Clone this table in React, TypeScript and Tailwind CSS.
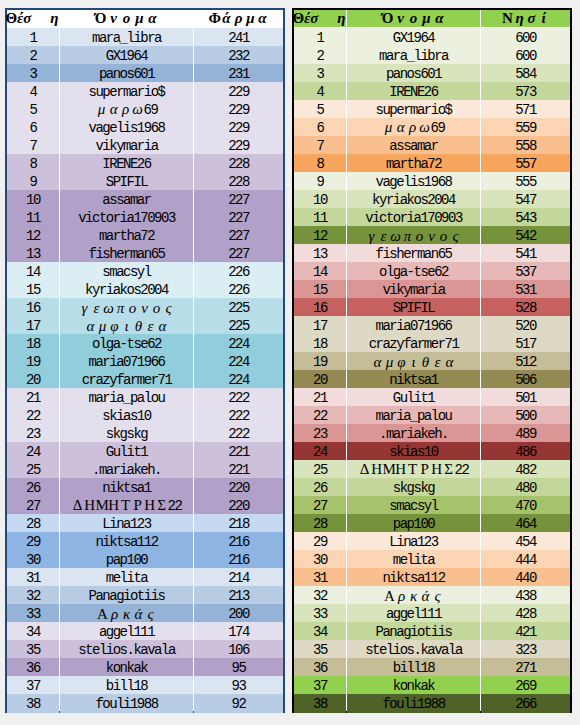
import React from "react";

type Row = [number, string, number, string];

const L1 = "#dbe5f1", L2 = "#b8cce4", L3 = "#95b3d7";
const P1 = "#e4dfec", P2 = "#ccc0da", P3 = "#b1a0c7";
const A1 = "#daeef3", A2 = "#b7dde8", A3 = "#92cddc";
const B28 = "#c5d9f1", B29 = "#8db4e2";

const leftRows: Row[] = [
  [1, "mara_libra", 241, L1],
  [2, "GX1964", 232, L2],
  [3, "panos601", 231, L3],
  [4, "supermario$", 229, P1],
  [5, "μαρω69", 229, P1],
  [6, "vagelis1968", 229, P1],
  [7, "vikymaria", 229, P1],
  [8, "IRENE26", 228, P2],
  [9, "SPIFIL", 228, P2],
  [10, "assamar", 227, P3],
  [11, "victoria170903", 227, P3],
  [12, "martha72", 227, P3],
  [13, "fisherman65", 227, P3],
  [14, "smacsyl", 226, A1],
  [15, "kyriakos2004", 226, A1],
  [16, "γεωπονος", 225, A2],
  [17, "αμφιθεα", 225, A2],
  [18, "olga-tse62", 224, A3],
  [19, "maria071966", 224, A3],
  [20, "crazyfarmer71", 224, A3],
  [21, "maria_palou", 222, P1],
  [22, "skias10", 222, P1],
  [23, "skgskg", 222, P1],
  [24, "Gulit1", 221, P2],
  [25, ".mariakeh.", 221, P2],
  [26, "niktsa1", 220, P3],
  [27, "ΔΗΜΗΤΡΗΣ22", 220, P3],
  [28, "Lina123", 218, B28],
  [29, "niktsa112", 216, B29],
  [30, "pap100", 216, B29],
  [31, "melita", 214, L1],
  [32, "Panagiotiis", 213, L2],
  [33, "Αρκάς", 200, L3],
  [34, "aggel111", 174, P1],
  [35, "stelios.kavala", 106, P2],
  [36, "konkak", 95, P3],
  [37, "bill18", 93, L1],
  [38, "fouli1988", 92, L2],
];

const G1 = "#ebf1de", G2 = "#d8e4bc", G3 = "#c4d79b", G4 = "#76933c";
const O1 = "#fde9d9", O2 = "#fcd5b4", O3 = "#fabf8f", O4 = "#f8a55d";
const R1 = "#f2dcdb", R2 = "#e6b8b7", R3 = "#da9694";
const T1 = "#ddd9c4", T2 = "#c4bd97", T3 = "#948a54";

const rightRows: Row[] = [
  [1, "GX1964", 600, G1],
  [2, "mara_libra", 600, G1],
  [3, "panos601", 584, G2],
  [4, "IRENE26", 573, G3],
  [5, "supermario$", 571, O1],
  [6, "μαρω69", 559, O2],
  [7, "assamar", 558, O3],
  [8, "martha72", 557, O4],
  [9, "vagelis1968", 555, G1],
  [10, "kyriakos2004", 547, G2],
  [11, "victoria170903", 543, G3],
  [12, "γεωπονος", 542, G4],
  [13, "fisherman65", 541, R1],
  [14, "olga-tse62", 537, R2],
  [15, "vikymaria", 531, R3],
  [16, "SPIFIL", 528, "#c5615e"],
  [17, "maria071966", 520, T1],
  [18, "crazyfarmer71", 517, T1],
  [19, "αμφιθεα", 512, T2],
  [20, "niktsa1", 506, T3],
  [21, "Gulit1", 501, R1],
  [22, "maria_palou", 500, R2],
  [23, ".mariakeh.", 489, R3],
  [24, "skias10", 486, "#963634"],
  [25, "ΔΗΜΗΤΡΗΣ22", 482, G2],
  [26, "skgskg", 480, G3],
  [27, "smacsyl", 470, "#a6c26b"],
  [28, "pap100", 464, G4],
  [29, "Lina123", 454, O1],
  [30, "melita", 444, O2],
  [31, "niktsa112", 440, O3],
  [32, "Αρκάς", 438, G1],
  [33, "aggel111", 428, G2],
  [34, "Panagiotiis", 421, G3],
  [35, "stelios.kavala", 323, T1],
  [36, "bill18", 271, T2],
  [37, "konkak", 269, "#92d050"],
  [38, "fouli1988", 266, "#4f6228"],
];

const isGreek = (c: string) => /[\u0370-\u03FF\u1F00-\u1FFF]/.test(c);
const isUpper = (c: string) => c !== c.toLowerCase();

function CellText({ text }: { text: string }) {
  const parts: React.ReactNode[] = [];
  let latin = "";
  const flush = (k: number) => {
    if (latin) {
      parts.push(
        <span key={"l" + k} className="font-['Liberation_Mono',monospace] text-[14px] tracking-[-1.5px]">
          {latin}
        </span>
      );
      latin = "";
    }
  };
  Array.from(text).forEach((c, i) => {
    if (isGreek(c)) {
      flush(i);
      parts.push(
        <span
          key={"g" + i}
          className={
            "inline-block w-[12px] text-center font-['Liberation_Serif',serif] text-[15px] " +
            (isUpper(c) ? "not-italic" : "italic")
          }
        >
          {c}
        </span>
      );
    } else {
      latin += c;
    }
  });
  flush(999);
  return <span className="whitespace-nowrap">{parts}</span>;
}

function HeadText({ text, w }: { text: string; w: string }) {
  return (
    <span className="whitespace-nowrap font-['Liberation_Serif',serif] text-[15px] font-bold">
      {Array.from(text).map((c, i) => (
        <span key={i} className={"inline-block text-center " + w + " " + (isUpper(c) ? "not-italic" : "italic")}>
          {c}
        </span>
      ))}
    </span>
  );
}

function Table({
  rows,
  border,
  headBg,
  third,
}: {
  rows: Row[];
  border: string;
  headBg: string;
  third: React.ReactNode;
}) {
  return (
    <div className={"w-[280px] self-start border-2 " + border}>
      <div className="flex flex-col gap-px bg-white">
        <div className={"grid h-[17px] grid-cols-[52px_133px_89px] gap-px text-black leading-[17px]"}>
          <div className={headBg + " flex items-center justify-center pr-[2px]"}>
            <span className="whitespace-nowrap font-['Liberation_Serif',serif] text-[15px] font-bold">
              <span className="not-italic">Θ</span>
              <span className="italic">έσ</span>
              <span className="ml-[19px] italic">η</span>
            </span>
          </div>
          <div className={headBg + " flex items-center justify-center"}>
            <HeadText text="Όνομα" w="w-[13px]" />
          </div>
          <div className={headBg + " flex items-center justify-center"}>{third}</div>
        </div>
        {rows.map(([n, name, v, bg]) => (
          <div key={n} className="grid h-[17px] grid-cols-[52px_133px_89px] gap-px text-black leading-[17px]">
            <div className="flex items-center justify-center" style={{ backgroundColor: bg }}>
              <CellText text={String(n)} />
            </div>
            <div className="flex items-center justify-center" style={{ backgroundColor: bg }}>
              <CellText text={name} />
            </div>
            <div className="flex items-center justify-center" style={{ backgroundColor: bg }}>
              <CellText text={String(v)} />
            </div>
          </div>
        ))}
      </div>
    </div>
  );
}

export default function App() {
  return (
    <div className="flex h-[725px] w-[580px] gap-[7px] bg-[#f0f0f0] pl-[5px] pt-[8px]">
      <Table
        rows={leftRows}
        border="border-[#24487b]"
        headBg="bg-white"
        third={<HeadText text="Φάρμα" w="w-[12px]" />}
      />
      <Table
        rows={rightRows}
        border="border-black"
        headBg="bg-[#92d050]"
        third={<HeadText text="Νησί" w="w-[12px]" />}
      />
    </div>
  );
}
